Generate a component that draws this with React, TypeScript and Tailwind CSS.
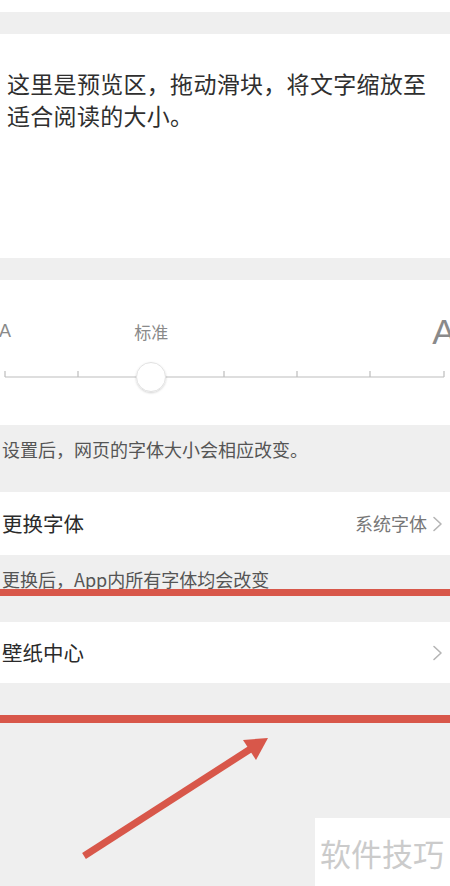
import React from 'react';

const font = { fontFamily: '"Noto Sans CJK SC", "Noto Sans", sans-serif' };

function Chevron() {
  return (
    <svg width="11" height="16" viewBox="0 0 11 16" className="shrink-0">
      <polyline points="2,1.5 9,8 2,14.5" fill="none" stroke="#b5b5b5" strokeWidth="1.6" strokeLinejoin="round" strokeLinecap="round" />
    </svg>
  );
}

function SliderTrack() {
  const ticks = [5, 78, 151, 224, 297, 370, 444];
  return (
    <svg width="450" height="40" viewBox="0 0 450 40" className="block">
      <defs>
        <filter id="knob" x="-50%" y="-50%" width="200%" height="200%">
          <feDropShadow dx="0" dy="1" stdDeviation="1.2" floodColor="#000" floodOpacity="0.18" />
        </filter>
      </defs>
      <line x1="5" y1="20" x2="444" y2="20" stroke="#bdbdbd" strokeWidth="1.2" />
      {ticks.map((x) => (
        <line key={x} x1={x} y1="14" x2={x} y2="20" stroke="#bdbdbd" strokeWidth="1.2" />
      ))}
      <circle cx="151" cy="20" r="14.5" fill="#fff" stroke="#e2e2e2" strokeWidth="1" filter="url(#knob)" />
    </svg>
  );
}

export default function App() {
  return (
    <div className="w-[450px] h-[886px] overflow-hidden bg-[#efefef] text-[#333]" style={font}>
      <div className="h-[12px] bg-white" />
      <div className="h-[22px]" />

      {/* preview */}
      <div className="h-[224px] bg-white pt-[33px] pl-[7px] pr-[14px]">
        <p className="text-[23px] leading-[32px] tracking-[0.3px] text-[#2f2f2f]">
          这里是预览区，拖动滑块，将文字缩放至适合阅读的大小。
        </p>
      </div>
      <div className="h-[22px]" />

      {/* slider */}
      <div className="h-[145px] bg-white pt-[34px]">
        <div className="ml-[5px] w-[439px] h-[34px] flex justify-between items-center text-[#8a8a8a]">
          <div className="w-0 flex justify-center">
            <span className="text-[18px] leading-none whitespace-nowrap" style={{ fontFamily: '"Liberation Sans", sans-serif' }}>A</span>
          </div>
          <div className="w-0" />
          <div className="w-0 flex justify-center">
            <span className="text-[17px] leading-none whitespace-nowrap">标准</span>
          </div>
          <div className="w-0" />
          <div className="w-0" />
          <div className="w-0" />
          <div className="w-0 flex justify-center">
            <span className="text-[35px] leading-none whitespace-nowrap" style={{ fontFamily: '"Liberation Sans", sans-serif' }}>A</span>
          </div>
        </div>
        <div className="mt-[9px]">
          <SliderTrack />
        </div>
      </div>

      <div className="h-[67px] pt-[12px] pl-[2px]">
        <p className="text-[18px] leading-[24px] text-[#555]">设置后，网页的字体大小会相应改变。</p>
      </div>

      {/* font row */}
      <div className="h-[63px] bg-white flex items-center justify-between pl-[2px] pr-[7px]">
        <span className="text-[20.5px] text-[#2a2a2a]">更换字体</span>
        <div className="flex items-center gap-[5px]">
          <span className="text-[18px] text-[#777]">系统字体</span>
          <Chevron />
        </div>
      </div>

      <div className="relative h-[67px] pt-[12px] pl-[2px]">
        <p className="text-[18px] leading-[24px] text-[#555]">更换后，App内所有字体均会改变</p>
        <div className="absolute left-0 right-0 top-[34px] h-[7px] bg-[#d8574a]" />
      </div>

      {/* wallpaper row */}
      <div className="h-[61px] bg-white flex items-center justify-between pl-[2px] pr-[7px]">
        <span className="text-[20.5px] text-[#2a2a2a]">壁纸中心</span>
        <Chevron />
      </div>

      <div className="relative h-[203px]">
        <div className="absolute left-0 right-0 top-[32px] h-[8px] bg-[#d8574a]" />
        <svg width="450" height="203" viewBox="0 0 450 203" className="absolute left-0 top-0">
          <line x1="84" y1="173" x2="252" y2="65" stroke="#d8574a" strokeWidth="7" />
          <polygon points="268,55 243,57 256,77" fill="#d8574a" />
        </svg>
        <div className="absolute right-0 bottom-0 w-[135px] h-[68px] bg-white pl-[5px] flex items-center">
          <span className="text-[31px] leading-none text-[#cbcbcb] whitespace-nowrap">软件技巧</span>
        </div>
      </div>
    </div>
  );
}
